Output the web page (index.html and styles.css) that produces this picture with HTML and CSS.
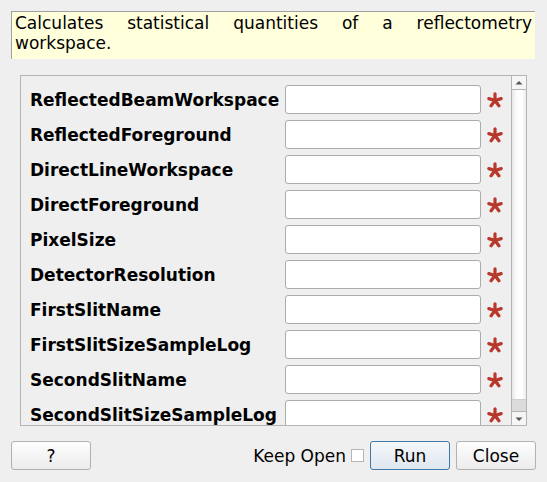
FILE: index.html
```html
<!DOCTYPE html>
<html>
<head>
<meta charset="utf-8">
<link rel="stylesheet" href="styles.css">
</head>
<body>
<div class="dialog">
  <div class="desc">Calculates statistical quantities of a reflectometry workspace.</div>
  <div class="frame">
    <div class="props">
      <div class="row"><span class="lbl">ReflectedBeamWorkspace</span><span class="inp"></span><svg class="req" viewBox="0 0 16 16"><g stroke="#b8382c" stroke-width="3.2" stroke-linecap="round"><line x1="8" y1="8.5" x2="8" y2="1.8"/><line x1="8" y1="8.5" x2="14.2" y2="6.6"/><line x1="8" y1="8.5" x2="11.9" y2="13.8"/><line x1="8" y1="8.5" x2="4.1" y2="13.8"/><line x1="8" y1="8.5" x2="1.8" y2="6.6"/></g></svg></div>
      <div class="row"><span class="lbl">ReflectedForeground</span><span class="inp"></span><svg class="req" viewBox="0 0 16 16"><g stroke="#b8382c" stroke-width="3.2" stroke-linecap="round"><line x1="8" y1="8.5" x2="8" y2="1.8"/><line x1="8" y1="8.5" x2="14.2" y2="6.6"/><line x1="8" y1="8.5" x2="11.9" y2="13.8"/><line x1="8" y1="8.5" x2="4.1" y2="13.8"/><line x1="8" y1="8.5" x2="1.8" y2="6.6"/></g></svg></div>
      <div class="row"><span class="lbl">DirectLineWorkspace</span><span class="inp"></span><svg class="req" viewBox="0 0 16 16"><g stroke="#b8382c" stroke-width="3.2" stroke-linecap="round"><line x1="8" y1="8.5" x2="8" y2="1.8"/><line x1="8" y1="8.5" x2="14.2" y2="6.6"/><line x1="8" y1="8.5" x2="11.9" y2="13.8"/><line x1="8" y1="8.5" x2="4.1" y2="13.8"/><line x1="8" y1="8.5" x2="1.8" y2="6.6"/></g></svg></div>
      <div class="row"><span class="lbl">DirectForeground</span><span class="inp"></span><svg class="req" viewBox="0 0 16 16"><g stroke="#b8382c" stroke-width="3.2" stroke-linecap="round"><line x1="8" y1="8.5" x2="8" y2="1.8"/><line x1="8" y1="8.5" x2="14.2" y2="6.6"/><line x1="8" y1="8.5" x2="11.9" y2="13.8"/><line x1="8" y1="8.5" x2="4.1" y2="13.8"/><line x1="8" y1="8.5" x2="1.8" y2="6.6"/></g></svg></div>
      <div class="row"><span class="lbl">PixelSize</span><span class="inp"></span><svg class="req" viewBox="0 0 16 16"><g stroke="#b8382c" stroke-width="3.2" stroke-linecap="round"><line x1="8" y1="8.5" x2="8" y2="1.8"/><line x1="8" y1="8.5" x2="14.2" y2="6.6"/><line x1="8" y1="8.5" x2="11.9" y2="13.8"/><line x1="8" y1="8.5" x2="4.1" y2="13.8"/><line x1="8" y1="8.5" x2="1.8" y2="6.6"/></g></svg></div>
      <div class="row"><span class="lbl">DetectorResolution</span><span class="inp"></span><svg class="req" viewBox="0 0 16 16"><g stroke="#b8382c" stroke-width="3.2" stroke-linecap="round"><line x1="8" y1="8.5" x2="8" y2="1.8"/><line x1="8" y1="8.5" x2="14.2" y2="6.6"/><line x1="8" y1="8.5" x2="11.9" y2="13.8"/><line x1="8" y1="8.5" x2="4.1" y2="13.8"/><line x1="8" y1="8.5" x2="1.8" y2="6.6"/></g></svg></div>
      <div class="row"><span class="lbl">FirstSlitName</span><span class="inp"></span><svg class="req" viewBox="0 0 16 16"><g stroke="#b8382c" stroke-width="3.2" stroke-linecap="round"><line x1="8" y1="8.5" x2="8" y2="1.8"/><line x1="8" y1="8.5" x2="14.2" y2="6.6"/><line x1="8" y1="8.5" x2="11.9" y2="13.8"/><line x1="8" y1="8.5" x2="4.1" y2="13.8"/><line x1="8" y1="8.5" x2="1.8" y2="6.6"/></g></svg></div>
      <div class="row"><span class="lbl">FirstSlitSizeSampleLog</span><span class="inp"></span><svg class="req" viewBox="0 0 16 16"><g stroke="#b8382c" stroke-width="3.2" stroke-linecap="round"><line x1="8" y1="8.5" x2="8" y2="1.8"/><line x1="8" y1="8.5" x2="14.2" y2="6.6"/><line x1="8" y1="8.5" x2="11.9" y2="13.8"/><line x1="8" y1="8.5" x2="4.1" y2="13.8"/><line x1="8" y1="8.5" x2="1.8" y2="6.6"/></g></svg></div>
      <div class="row"><span class="lbl">SecondSlitName</span><span class="inp"></span><svg class="req" viewBox="0 0 16 16"><g stroke="#b8382c" stroke-width="3.2" stroke-linecap="round"><line x1="8" y1="8.5" x2="8" y2="1.8"/><line x1="8" y1="8.5" x2="14.2" y2="6.6"/><line x1="8" y1="8.5" x2="11.9" y2="13.8"/><line x1="8" y1="8.5" x2="4.1" y2="13.8"/><line x1="8" y1="8.5" x2="1.8" y2="6.6"/></g></svg></div>
      <div class="row"><span class="lbl">SecondSlitSizeSampleLog</span><span class="inp"></span><svg class="req" viewBox="0 0 16 16"><g stroke="#b8382c" stroke-width="3.2" stroke-linecap="round"><line x1="8" y1="8.5" x2="8" y2="1.8"/><line x1="8" y1="8.5" x2="14.2" y2="6.6"/><line x1="8" y1="8.5" x2="11.9" y2="13.8"/><line x1="8" y1="8.5" x2="4.1" y2="13.8"/><line x1="8" y1="8.5" x2="1.8" y2="6.6"/></g></svg></div>
    </div>
    <div class="sbar">
      <div class="sbtn sup"><svg viewBox="0 0 14 14" class="arr"><polygon points="3.5,8.5 10.5,8.5 7,5" fill="#555"/></svg></div>
      <div class="track"><div class="handle"></div></div>
      <div class="sbtn sdown"><svg viewBox="0 0 14 14" class="arr"><polygon points="3.5,5.5 10.5,5.5 7,9" fill="#555"/></svg></div>
    </div>
  </div>
  <div class="bottom">
    <button class="btn help">?</button>
    <div class="spacer"></div>
    <span class="keep">Keep Open</span>
    <span class="check"></span>
    <button class="btn run">Run</button>
    <button class="btn close">Close</button>
  </div>
</div>
</body>
</html>
```

FILE: styles.css
```css
html, body {
  margin: 0;
  padding: 0;
  background: #efefef;
}
body {
  width: 547px;
  height: 482px;
  overflow: hidden;
  font-family: "DejaVu Sans", sans-serif;
  font-size: 17px;
  color: #000;
}
.dialog {
  padding: 11px 11px 0 11px;
}
.desc {
  height: 45px;
  margin-right: 1px;
  background: #ffffdc;
  border-top: 1px solid #a0a0a0;
  border-left: 1px solid #a0a0a0;
  padding: 2px 3px 0 3px;
  line-height: 19.5px;
  text-align: justify;
}
.frame {
  margin: 16px 9px 0 9px;
  height: 349px;
  border: 1px solid #b4b4b4;
  display: flex;
}
.props {
  flex: 1;
  overflow: hidden;
  padding: 9px 0 0 9px;
  display: flex;
  flex-direction: column;
  gap: 6px;
}
.row {
  display: flex;
  align-items: center;
  height: 29px;
  flex: none;
}
.lbl {
  width: 255px;
  font-weight: bold;
  white-space: nowrap;
}
.inp {
  width: 194px;
  height: 27px;
  background: #fff;
  border: 1px solid #ababab;
  border-radius: 3px;
}
.req {
  width: 16px;
  height: 16px;
  margin-left: 6px;
}
.sbar {
  width: 14px;
  border-left: 1px solid #b4b4b4;
  display: flex;
  flex-direction: column;
  background: linear-gradient(to right, #e6e6e6, #fbfbfb 30%, #ffffff 70%, #ececec);
}
.sbtn {
  height: 13px;
  background: #f5f5f5;
  display: flex;
  align-items: center;
  justify-content: center;
}
.sup { border-bottom: 1px solid #b4b4b4; }
.sdown { border-top: 1px solid #b4b4b4; }
.arr { width: 14px; height: 14px; }
.track {
  flex: 1;
  display: flex;
  flex-direction: column;
  justify-content: flex-end;
}
.handle {
  height: 11px;
  background: #dcdcdc;
  border-top: 1px solid #cfcfcf;
}
.bottom {
  margin-top: 15px;
  display: flex;
  align-items: center;
}
.btn {
  font-family: "DejaVu Sans", sans-serif;
  font-size: 17px;
  height: 29px;
  width: 80px;
  padding: 0;
  border: 1px solid #b1b1b1;
  border-radius: 3px;
  background: linear-gradient(#fdfdfd, #ececec);
  color: #000;
}
.spacer { flex: 1; }
.keep { margin-right: 5px; }
.check {
  width: 11px;
  height: 11px;
  border: 1px solid #b5b5b5;
  background: #fff;
  margin-right: 6px;
}
.run {
  width: 80px;
  border-color: #3e78a8;
  background: linear-gradient(#f4f7fa, #dfe7ef);
  margin-right: 6px;
}
.close { width: 80px; }
```
